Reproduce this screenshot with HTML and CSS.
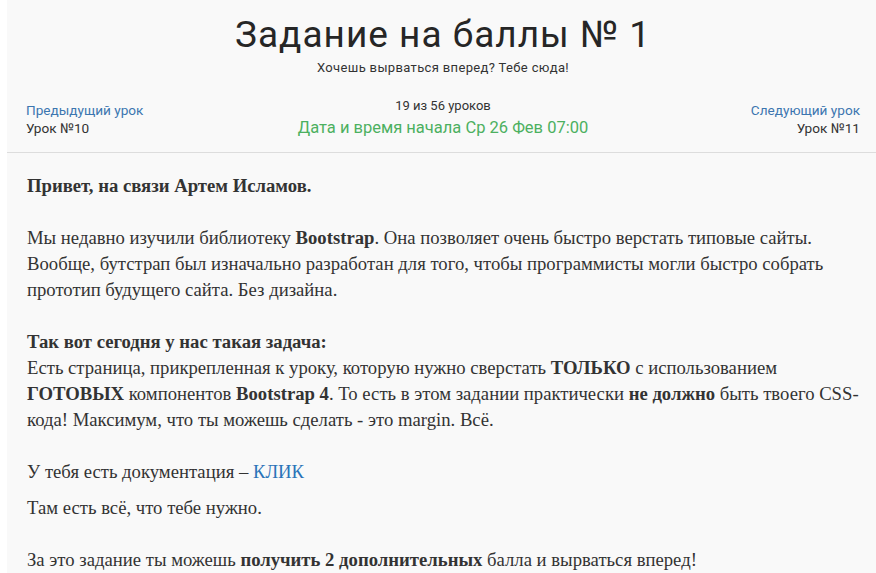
FILE: index.html
```html
<!DOCTYPE html>
<html lang="ru">
<head>
<meta charset="utf-8">
<title>Задание на баллы № 1</title>
<link rel="stylesheet" href="styles.css">
</head>
<body>
<div class="page">
  <header class="head">
    <h1 class="title">Задание на баллы № 1</h1>
    <div class="subtitle">Хочешь вырваться вперед? Тебе сюда!</div>
    <nav class="lesson-nav">
      <div class="nav-side nav-left">
        <a class="nav-link" href="#">Предыдущий урок</a>
        <span class="nav-name">Урок №10</span>
      </div>
      <div class="nav-center">
        <span class="count">19 из 56 уроков</span>
        <span class="date">Дата и время начала Ср 26 Фев 07:00</span>
      </div>
      <div class="nav-side nav-right">
        <a class="nav-link" href="#">Следующий урок</a>
        <span class="nav-name">Урок №11</span>
      </div>
    </nav>
  </header>
  <main class="content">
    <p><b>Привет, на связи Артем Исламов.</b><br><br>Мы недавно изучили библиотеку <b>Bootstrap</b>. Она позволяет очень быстро верстать типовые сайты. Вообще, бутстрап был изначально разработан для того, чтобы программисты могли быстро собрать прототип будущего сайта. Без дизайна.<br><br><b>Так вот сегодня у нас такая задача:</b><br>Есть страница, прикрепленная к уроку, которую нужно сверстать <b>ТОЛЬКО</b> с использованием <b>ГОТОВЫХ</b> компонентов <b>Bootstrap 4</b>. То есть в этом задании практически <b>не должно</b> быть твоего CSS-кода! Максимум, что ты можешь сделать - это margin. Всё.<br><br>У тебя есть документация – <a class="link" href="#">КЛИК</a></p>
    <p>Там есть всё, что тебе нужно.<br><br>За это задание ты можешь <b>получить 2 дополнительных</b> балла и вырваться вперед!</p>
  </main>
</div>
</body>
</html>
```
FILE: styles.css
```css
html, body {
  margin: 0;
  padding: 0;
  background: #ffffff;
}
body {
  padding-left: 7px;
}
.page {
  background: #f9f9f9;
  min-height: 573px;
}
.head {
  font-family: Roboto, "Liberation Sans", sans-serif;
  color: #333333;
  text-align: center;
  padding: 11px 16px 0 19px;
  border-bottom: 1px solid #dddddd;
}
.title {
  margin: 0;
  font-size: 37px;
  letter-spacing: 1px;
  font-weight: 400;
  line-height: 48px;
  color: #262626;
}
.subtitle {
  font-size: 13px;
  letter-spacing: 0.35px;
  line-height: 18px;
  margin-top: 0;
}
.lesson-nav {
  display: flex;
  justify-content: space-between;
  align-items: flex-start;
  margin-top: 20px;
  padding-bottom: 13px;
}
.nav-side {
  display: flex;
  flex-direction: column;
  width: 200px;
  padding-top: 4px;
}
.nav-left { text-align: left; }
.nav-right { text-align: right; }
.nav-link {
  color: #3c76b0;
  text-decoration: none;
  font-size: 13.6px;
  line-height: 18px;
}
.nav-name {
  font-size: 13.6px;
  line-height: 18px;
  color: #333333;
}
.nav-center {
  display: flex;
  flex-direction: column;
  align-items: center;
}
.count {
  font-size: 13px;
  line-height: 18px;
}
.date {
  font-size: 16.5px;
  line-height: 22px;
  margin-top: 2px;
  color: #4cb060;
}
.content {
  font-family: "Liberation Serif", "Times New Roman", serif;
  font-size: 18.7px;
  line-height: 26px;
  color: #333333;
  padding: 20px 16px 0 20px;
}
.content p {
  margin: 0 0 10px;
}
.content b {
  font-weight: 700;
}
.link {
  color: #2a73b8;
  text-decoration: none;
}
```
